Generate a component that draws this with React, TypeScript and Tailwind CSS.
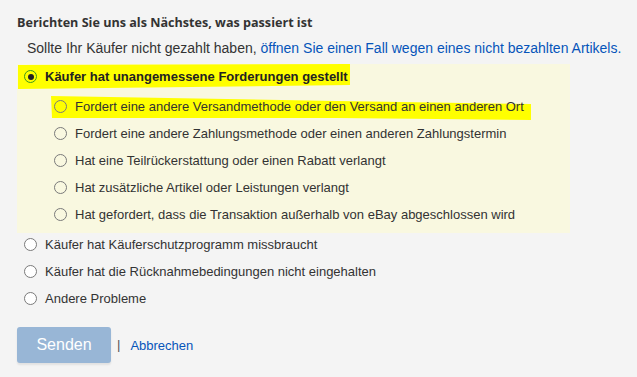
import React from 'react';

const subOptions = [
  'Fordert eine andere Versandmethode oder den Versand an einen anderen Ort',
  'Fordert eine andere Zahlungsmethode oder einen anderen Zahlungstermin',
  'Hat eine Teilrückerstattung oder einen Rabatt verlangt',
  'Hat zusätzliche Artikel oder Leistungen verlangt',
  'Hat gefordert, dass die Transaktion außerhalb von eBay abgeschlossen wird',
];

const otherOptions = [
  'Käufer hat Käuferschutzprogramm missbraucht',
  'Käufer hat die Rücknahmebedingungen nicht eingehalten',
  'Andere Probleme',
];

function Radio({ checked = false, clear = false }: { checked?: boolean; clear?: boolean }) {
  if (checked) {
    return (
      <span className="flex h-[13px] w-[13px] shrink-0 items-center justify-center rounded-full border border-[#3c9a1c] bg-transparent">
        <span className="h-[6px] w-[6px] rounded-full bg-[#222]" />
      </span>
    );
  }
  return (
    <span
      className={`h-[13px] w-[13px] shrink-0 rounded-full border border-[#7a7a7a] ${clear ? 'bg-transparent' : 'bg-white'}`}
    />
  );
}

export default function App() {
  return (
    <main
      className="min-h-[377px] w-[637px] bg-[#f4f4f4] pt-[14px] text-[13px] text-[#333]"
      style={{ fontFamily: '"Liberation Sans", Arial, sans-serif' }}
    >
      <h1
        className="pl-[17px] text-[12.6px] font-bold leading-[18px] text-[#333]"
        style={{ fontFamily: '"Open Sans", "Liberation Sans", sans-serif' }}
      >
        Berichten Sie uns als Nächstes, was passiert ist
      </h1>
      <p className="mt-[8px] pl-[27px] text-[14px] leading-[17px]">
        Sollte Ihr Käufer nicht gezahlt haben,{' '}
        <a className="text-[#0654ba]">öffnen Sie einen Fall wegen eines nicht bezahlten Artikels.</a>
      </p>

      {/* selected reason */}
      <div className="relative ml-[17px] mt-[7px] w-[553px] bg-[#f9f8e0] pb-[5px]">
        <svg className="absolute left-0 top-0 h-[170px] w-[553px]" viewBox="0 0 553 170">
          <polygon points="1,1 333,0 333,21 1,25" fill="#ffff00" />
          <polygon points="34,32 320,37 514,40 514,56 320,54 35,54" fill="#ffff00" />
        </svg>
        <label className="relative flex h-[24px] items-center gap-[8px] pl-[7px] pt-[1px] font-bold text-[#222]">
          <Radio checked />
          Käufer hat unangemessene Forderungen gestellt
        </label>
        <div className="relative mt-[5px] flex flex-col">
          {subOptions.map((o) => (
            <label key={o} className="flex h-[27px] items-center gap-[8px] pl-[37px] text-[#333]">
              <Radio clear />
              {o}
            </label>
          ))}
        </div>
      </div>

      <div className="mt-[-2px] flex flex-col">
        {otherOptions.map((o) => (
          <label key={o} className="flex h-[27px] items-center gap-[8px] pl-[24px]">
            <Radio />
            {o}
          </label>
        ))}
      </div>

      <div className="mt-[15px] flex items-center pl-[17px]">
        <button className="h-[36px] w-[94px] rounded-[3px] bg-[#98b6d6] text-[16px] text-white shadow-[0_2px_2px_rgba(0,0,0,0.08)]">
          Senden
        </button>
        <span className="ml-[6px] text-[#555]">|</span>
        <a className="ml-[10px] mt-[1px] text-[#0654ba]">Abbrechen</a>
      </div>
    </main>
  );
}
